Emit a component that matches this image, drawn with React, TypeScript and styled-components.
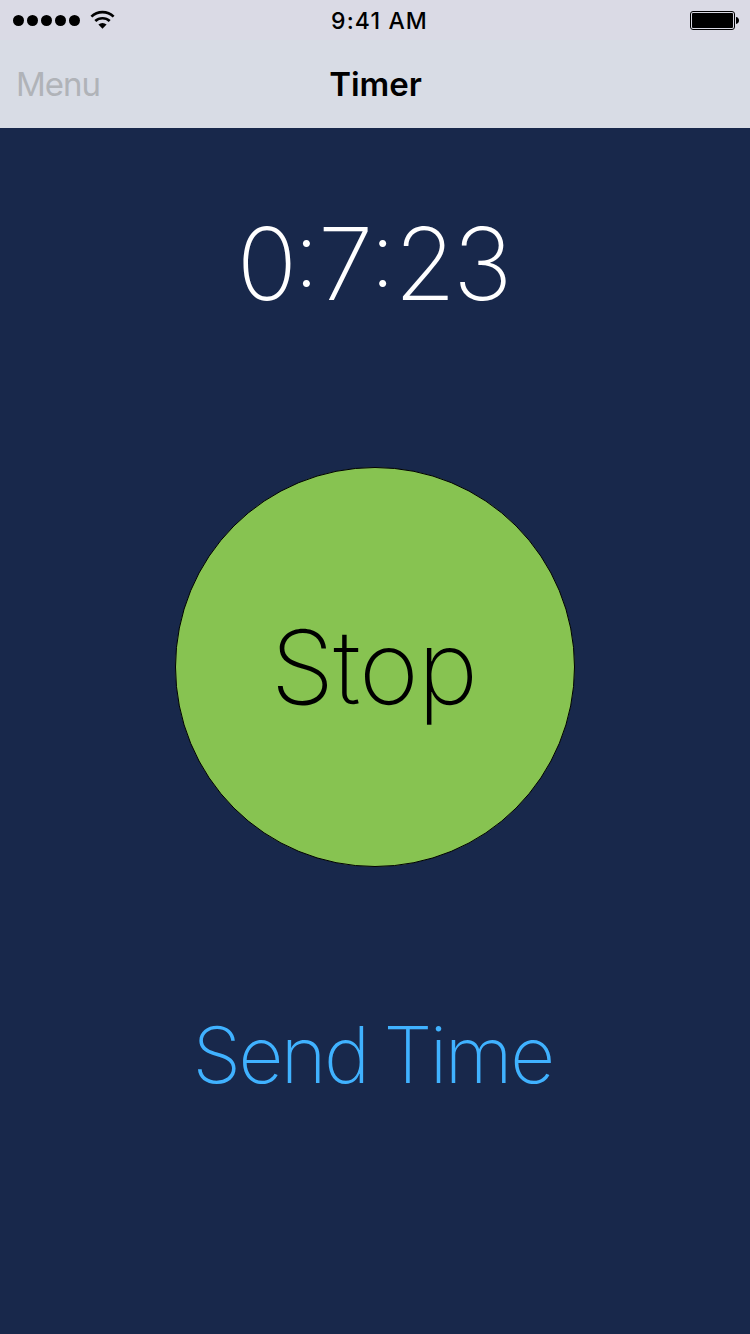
import React from "react";
import styled, { createGlobalStyle } from "styled-components";

const GlobalStyle = createGlobalStyle`
  * { box-sizing: border-box; }
  body { margin: 0; background: #18284b; }
  button { border: 0; padding: 0; background: none; font: inherit; }
`;

const Screen = styled.main`
  width: 750px;
  height: 1334px;
  overflow: hidden;
  display: flex;
  flex-direction: column;
  align-items: center;
  background: #18284b;
  font-family: Inter, "Liberation Sans", sans-serif;
`;

const Header = styled.header`
  width: 100%;
  height: 128px;
  flex: none;
  background: linear-gradient(#dadae5 0, #dadae5 40px, #d8dce5 40px, #d8dce5 100%);
`;

const StatusBar = styled.div`
  height: 40px;
  padding: 0 11px 0 13px;
  display: grid;
  grid-template-columns: 1fr auto 1fr;
  align-items: center;
`;

const Signal = styled.div`
  display: flex;
  align-items: center;
  gap: 3px;
`;

const Dot = styled.i`
  width: 11px;
  height: 11px;
  border-radius: 50%;
  background: #000;
`;

const Wifi = styled.svg`
  margin-left: 7px;
`;

const Clock = styled.span`
  padding: 2px 0 0 7px;
  font-size: 23px;
  line-height: 38px;
  font-weight: 500;
  letter-spacing: 1.15px;
`;

const Battery = styled.svg`
  justify-self: end;
`;

const NavBar = styled.nav`
  height: 88px;
  padding: 0 16px;
  display: grid;
  grid-template-columns: 1fr auto 1fr;
  align-items: center;
`;

const MenuButton = styled.button`
  justify-self: start;
  font-size: 33px;
  line-height: 40px;
  letter-spacing: -1px;
  color: #b0b3b8;
`;

const Title = styled.h1`
  margin: 0;
  padding-left: 1px;
  font-size: 33px;
  line-height: 40px;
  font-weight: 600;
`;

const Elapsed = styled.time`
  margin: 76px 4px 0 0;
  height: 120px;
  font-size: 100px;
  line-height: 120px;
  font-weight: 200;
  letter-spacing: -3px;
  color: #fff;
`;

const Colon = styled.span`
  font-size: 90%;
  line-height: 0;
  font-weight: 200;
  letter-spacing: -1px;
  vertical-align: 13px;
`;

const StopButton = styled.button`
  && {
    margin-top: 143px;
    width: 400px;
    height: 400px;
    flex: none;
    border: 1px solid #000;
    border-radius: 50%;
    padding-right: 2px;
    background: #87c351;
    font-size: 102px;
    line-height: 126px;
    font-weight: 200;
    letter-spacing: -1px;
    color: #000;
  }
`;

const SendButton = styled.button`
  && {
    margin: 138px 5px 0 0;
    font-size: 78px;
    line-height: 100px;
    font-weight: 200;
    letter-spacing: -2.5px;
    word-spacing: -3.6px;
    color: #40b2ff;
  }
`;

export default function App() {
  return (
    <Screen>
      <GlobalStyle />
      <Header>
        <StatusBar>
          <Signal>
            {[0, 1, 2, 3, 4].map((n) => <Dot key={n} />)}
            <Wifi width="25" height="20" viewBox="0 0 25 20">
              <g fill="none" stroke="#000" strokeWidth="2.7">
                <path d="M1.4 6.6a16 16 0 0 1 22.2 0" />
                <path d="M5.3 11.1a10.5 10.5 0 0 1 14.4 0" />
              </g>
              <path d="M8.4 14.6a6 6 0 0 1 8.2 0L12.5 18.8z" />
            </Wifi>
          </Signal>
          <Clock>9:41 AM</Clock>
          <Battery width="49" height="19" viewBox="0 0 49 19">
            <rect x=".5" y=".5" width="44" height="18" rx="2.5" fill="none" stroke="#000" />
            <rect x="2" y="2" width="41" height="15" rx="1" />
            <path d="M46 6c4 .3 4 6.7 0 7z" />
          </Battery>
        </StatusBar>
        <NavBar>
          <MenuButton>Menu</MenuButton>
          <Title>Timer</Title>
        </NavBar>
      </Header>
      <Elapsed>0<Colon>:</Colon>7<Colon>:</Colon>23</Elapsed>
      <StopButton>Stop</StopButton>
      <SendButton>Send Time</SendButton>
    </Screen>
  );
}
